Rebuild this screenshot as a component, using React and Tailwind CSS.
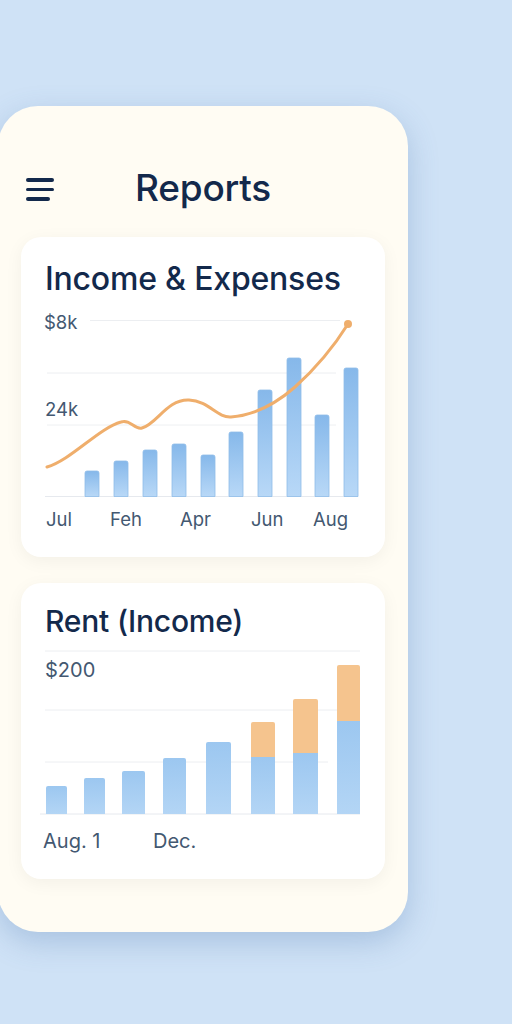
import React from 'react'

const incomeBars = [
  { x: 64, top: 171 },
  { x: 93, top: 161 },
  { x: 122, top: 150 },
  { x: 151, top: 144 },
  { x: 180, top: 155 },
  { x: 208, top: 132 },
  { x: 237, top: 90 },
  { x: 266, top: 58 },
  { x: 294, top: 115 },
  { x: 323, top: 68 },
]

const rentBars = [
  { x: 25, w: 21, blue: 146 },
  { x: 63, w: 21, blue: 138 },
  { x: 101, w: 23, blue: 131 },
  { x: 142, w: 23, blue: 118 },
  { x: 185, w: 25, blue: 102 },
  { x: 230, w: 24, blue: 117, orange: 82 },
  { x: 272, w: 25, blue: 113, orange: 59 },
  { x: 316, w: 23, blue: 81, orange: 25 },
]

const labelStyle = { fontFamily: 'Inter, "Noto Sans", sans-serif' }

function IncomeChart() {
  const base = 196.5
  return (
    <svg width="364" height="240" viewBox="0 0 364 240" className="block mt-[3px]" style={labelStyle}>
      <defs>
        <linearGradient id="barA" x1="0" y1="0" x2="0" y2="1">
          <stop offset="0" stopColor="#86b8ea" />
          <stop offset="1" stopColor="#b8d8f7" />
        </linearGradient>
      </defs>
      <line x1="69" y1="20.5" x2="319" y2="20.5" stroke="#eceef1" strokeWidth="1" />
      <line x1="26" y1="73" x2="315" y2="73" stroke="#eceef1" strokeWidth="1" />
      <line x1="26" y1="125" x2="315" y2="125" stroke="#eef0f2" strokeWidth="1" />
      <line x1="24" y1={base} x2="337" y2={base} stroke="#e6e9ee" strokeWidth="1" />
      <text x="23" y="29" fontSize="18.5" fill="#435871">$8k</text>
      <text x="24" y="116" fontSize="18.5" fill="#435871">24k</text>
      {incomeBars.map((b, i) => (
        <path
          key={i}
          d={`M${b.x} ${base} V${b.top + 2} Q${b.x} ${b.top} ${b.x + 2} ${b.top} H${b.x + 12} Q${b.x + 14} ${b.top} ${b.x + 14} ${b.top + 2} V${base} Z`}
          fill="url(#barA)"
          stroke="#8fbde9"
          strokeWidth="0.8"
        />
      ))}
      <path
        d="M26 167 C 50 160, 78 128, 100 122 C 110 119, 113 130, 121 128 C 136 124, 146 99, 168 100 C 188 101, 196 118, 210 117 C 235 115, 258 101, 274 87 C 294 69, 312 48, 327 24"
        fill="none"
        stroke="#efae6c"
        strokeWidth="3"
        strokeLinecap="round"
      />
      <circle cx="327" cy="24" r="4" fill="#efae6c" />
      <text x="25" y="226" fontSize="18.5" fill="#435871">Jul</text>
      <text x="89" y="226" fontSize="18.5" fill="#435871">Feh</text>
      <text x="159" y="226" fontSize="18.5" fill="#435871">Apr</text>
      <text x="230" y="226" fontSize="18.5" fill="#435871">Jun</text>
      <text x="292" y="226" fontSize="18.5" fill="#435871">Aug</text>
    </svg>
  )
}

function RentChart() {
  const base = 174
  return (
    <svg width="364" height="230" viewBox="0 0 364 230" className="block mt-[1px]" style={labelStyle}>
      <defs>
        <linearGradient id="barB" x1="0" y1="0" x2="0" y2="1">
          <stop offset="0" stopColor="#9cc7f0" />
          <stop offset="1" stopColor="#b3d5f5" />
        </linearGradient>
      </defs>
      <line x1="24" y1="11" x2="339" y2="11" stroke="#eceef1" strokeWidth="1" />
      <line x1="24" y1="70" x2="339" y2="70" stroke="#eceef1" strokeWidth="1" />
      <line x1="24" y1="122" x2="307" y2="122" stroke="#eceef1" strokeWidth="1" />
      <line x1="19" y1={base} x2="339" y2={base} stroke="#e6e9ee" strokeWidth="1" />
      <text x="24" y="37" fontSize="20" fill="#435871">$200</text>
      {rentBars.map((b, i) => (
        <g key={i}>
          {b.orange && (
            <path
              d={`M${b.x} ${b.blue} V${b.orange + 2} Q${b.x} ${b.orange} ${b.x + 2} ${b.orange} H${b.x + b.w - 2} Q${b.x + b.w} ${b.orange} ${b.x + b.w} ${b.orange + 2} V${b.blue} Z`}
              fill="#f5c48e"
            />
          )}
          <path
            d={
              b.orange
                ? `M${b.x} ${base} V${b.blue} H${b.x + b.w} V${base} Z`
                : `M${b.x} ${base} V${b.blue + 2} Q${b.x} ${b.blue} ${b.x + 2} ${b.blue} H${b.x + b.w - 2} Q${b.x + b.w} ${b.blue} ${b.x + b.w} ${b.blue + 2} V${base} Z`
            }
            fill="url(#barB)"
          />
        </g>
      ))}
      <text x="22" y="208" fontSize="20" fill="#435871">Aug. 1</text>
      <text x="132" y="208" fontSize="20" fill="#435871">Dec.</text>
    </svg>
  )
}

export default function App() {
  return (
    <div className="w-[512px] h-[1024px] overflow-hidden bg-[#cfe2f6] pt-[106px]" style={labelStyle}>
      <div className="-ml-[2px] w-[410px] h-[826px] rounded-[40px] bg-[#fffcf3] shadow-[0_10px_30px_rgba(70,110,170,0.28)] pt-[60px]">
        {/* Header */}
        <div className="relative flex items-center justify-center h-[44px]">
          <div className="absolute left-[28px] top-[12px] flex flex-col gap-[6px]">
            <span className="block w-[28px] h-[3.5px] rounded-full bg-[#13294b]" />
            <span className="block w-[28px] h-[3.5px] rounded-full bg-[#13294b]" />
            <span className="block w-[24px] h-[3.5px] rounded-full bg-[#13294b]" />
          </div>
          <h1 className="text-[37px] leading-[44px] font-medium text-[#13294b] tracking-[-0.2px]">Reports</h1>
        </div>

        {/* Income & Expenses */}
        <div className="mt-[27px] mx-[23px] w-[364px] h-[320px] rounded-[20px] bg-white shadow-[0_4px_18px_rgba(0,0,0,0.05)] pt-[24px]">
          <h2 className="pl-[24px] text-[32px] leading-[36px] font-medium text-[#13294b] tracking-[-0.2px]">Income &amp; Expenses</h2>
          <IncomeChart />
        </div>

        {/* Rent */}
        <div className="mt-[26px] mx-[23px] w-[364px] h-[296px] rounded-[20px] bg-white shadow-[0_4px_18px_rgba(0,0,0,0.05)] pt-[20px]">
          <h2 className="pl-[24px] text-[30px] leading-[36px] font-medium text-[#13294b] tracking-[-0.2px]">Rent (Income)</h2>
          <RentChart />
        </div>
      </div>
    </div>
  )
}
